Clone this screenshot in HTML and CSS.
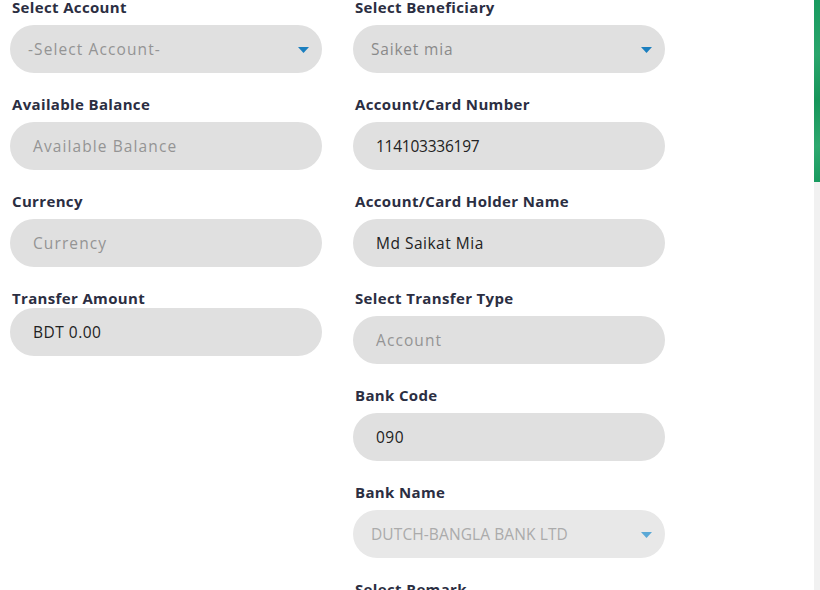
FILE: index.html
```html
<!DOCTYPE html>
<html lang="en">
<head>
<meta charset="utf-8">
<title>Fund Transfer</title>
<link rel="stylesheet" href="styles.css">
</head>
<body>
<div class="page">
  <main class="form">
    <div class="col">
      <div class="field">
        <label class="label">Select Account</label>
        <div class="control select"><span class="ph">-Select Account-</span>
          <svg class="caret" width="11" height="6" viewBox="0 0 11 6"><polygon points="0,0 11,0 5.5,6" /></svg></div>
      </div>
      <div class="field">
        <label class="label">Available Balance</label>
        <div class="control input"><span class="ph">Available Balance</span></div>
      </div>
      <div class="field">
        <label class="label">Currency</label>
        <div class="control input"><span class="ph">Currency</span></div>
      </div>
      <div class="field tight">
        <label class="label">Transfer Amount</label>
        <div class="control input"><span class="val">BDT 0.00</span></div>
      </div>
    </div>
    <div class="col">
      <div class="field">
        <label class="label">Select Beneficiary</label>
        <div class="control select"><span class="sel">Saiket mia</span>
          <svg class="caret" width="11" height="6" viewBox="0 0 11 6"><polygon points="0,0 11,0 5.5,6" /></svg></div>
      </div>
      <div class="field">
        <label class="label">Account/Card Number</label>
        <div class="control input"><span class="val num">114103336197</span></div>
      </div>
      <div class="field">
        <label class="label">Account/Card Holder Name</label>
        <div class="control input"><span class="val">Md Saikat Mia</span></div>
      </div>
      <div class="field">
        <label class="label">Select Transfer Type</label>
        <div class="control input"><span class="ph">Account</span></div>
      </div>
      <div class="field">
        <label class="label">Bank Code</label>
        <div class="control input"><span class="val">090</span></div>
      </div>
      <div class="field">
        <label class="label">Bank Name</label>
        <div class="control select disabled"><span class="dis">DUTCH-BANGLA BANK LTD</span>
          <svg class="caret" width="11" height="6" viewBox="0 0 11 6"><polygon points="0,0 11,0 5.5,6" /></svg></div>
      </div>
      <div class="field">
        <label class="label">Select Remark</label>
        <div class="control select"><span class="ph">-Select Remark-</span></div>
      </div>
    </div>
  </main>
  <aside class="edge">
    <div class="edge-top"></div>
  </aside>
</div>
</body>
</html>
```
FILE: styles.css
```css
html, body {
  margin: 0;
  padding: 0;
  background: #ffffff;
  overflow: hidden;
}
body {
  font-family: "Open Sans", "Noto Sans", sans-serif;
  color: #2b2e42;
  height: 590px;
}
.page {
  display: flex;
  height: 590px;
}
.form {
  flex: 1;
  display: flex;
  gap: 31px;
  padding-left: 10px;
  margin-top: -3px;
  align-items: flex-start;
}
.col {
  width: 312px;
  display: flex;
  flex-direction: column;
  gap: 21px;
}
.field {
  display: flex;
  flex-direction: column;
  gap: 8px;
}
.field.tight {
  gap: 0;
}
.label {
  font-size: 15px;
  font-weight: 700;
  line-height: 20px;
  padding-left: 2px;
  color: #2b2e42;
  letter-spacing: 0.35px;
}
.control {
  height: 48px;
  border-radius: 24px;
  background: #e0e0e0;
  display: flex;
  align-items: center;
  font-size: 15.5px;
  letter-spacing: 0.5px;
  box-sizing: border-box;
}
.input {
  padding-left: 23px;
}
.select {
  padding-left: 18px;
  padding-right: 13px;
  justify-content: space-between;
}
.select.disabled {
  background: #e8e8e8;
}
.ph {
  color: #949494;
  letter-spacing: 1.1px;
}
.sel {
  color: #8a8a8a;
  letter-spacing: 0.8px;
}
.val {
  color: #222;
}
.num {
  letter-spacing: -0.25px;
}
.dis {
  color: #ababab;
  letter-spacing: 0.1px;
}
.caret {
  fill: #1b7fbf;
  margin-top: 1px;
}
.disabled .caret {
  fill: #5aa8d6;
}
.edge {
  width: 6px;
  background: #f1f1f1;
  display: flex;
  flex-direction: column;
}
.edge-top {
  height: 182px;
  background: linear-gradient(160deg, #189a5f 0%, #2aa56c 30%, #16955a 55%, #2ea86f 80%, #189a5f 100%);
}
```
